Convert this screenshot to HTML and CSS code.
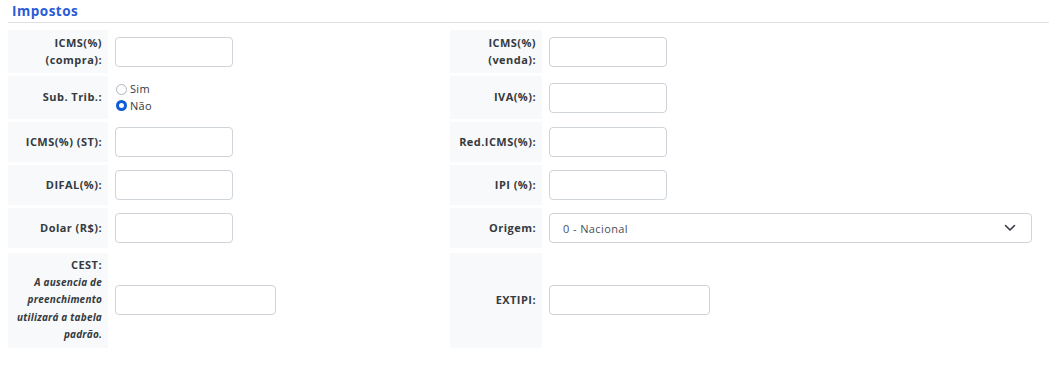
FILE: index.html
```html
<!DOCTYPE html>
<html lang="pt-BR">
<head>
<meta charset="utf-8">
<title>Impostos</title>
<link rel="stylesheet" href="styles.css">
</head>
<body>
<div class="section">
  <h2 class="section-title">Impostos</h2>
  <div class="form">
    <div class="lbl">ICMS(%)<br>(compra):</div>
    <div class="fld"><input class="inp" type="text"></div>
    <div class="lbl">ICMS(%)<br>(venda):</div>
    <div class="fld"><input class="inp" type="text"></div>

    <div class="lbl">Sub. Trib.:</div>
    <div class="fld">
      <div class="radios">
        <label class="radio"><span class="dot"></span>Sim</label>
        <label class="radio"><span class="dot on"></span>Não</label>
      </div>
    </div>
    <div class="lbl">IVA(%):</div>
    <div class="fld"><input class="inp" type="text"></div>

    <div class="lbl">ICMS(%) (ST):</div>
    <div class="fld"><input class="inp" type="text"></div>
    <div class="lbl">Red.ICMS(%):</div>
    <div class="fld"><input class="inp" type="text"></div>

    <div class="lbl">DIFAL(%):</div>
    <div class="fld"><input class="inp" type="text"></div>
    <div class="lbl">IPI (%):</div>
    <div class="fld"><input class="inp" type="text"></div>

    <div class="lbl">Dolar (R$):</div>
    <div class="fld"><input class="inp" type="text"></div>
    <div class="lbl">Origem:</div>
    <div class="fld">
      <div class="select">
        <span>0 - Nacional</span>
        <svg class="chev" width="12" height="8" viewBox="0 0 12 8"><path d="M1.5 1.5 L6 6 L10.5 1.5" fill="none" stroke="#343a40" stroke-width="1.6" stroke-linecap="round" stroke-linejoin="round"/></svg>
      </div>
    </div>

    <div class="lbl tall last"><div class="lbl-stack"><span>CEST:</span><em class="hint">A ausencia de<br>preenchimento<br>utilizará a tabela<br>padrão.</em></div></div>
    <div class="fld last"><input class="inp wide" type="text"></div>
    <div class="lbl last">EXTIPI:</div>
    <div class="fld last"><input class="inp wide" type="text"></div>
  </div>
</div>
</body>
</html>
```

FILE: styles.css
```css
* { box-sizing: border-box; }
body {
  margin: 0;
  padding: 0 0 0 8px;
  font-family: "Open Sans", "Noto Sans", sans-serif;
  color: #343a40;
  background: #fff;
}
.section { width: 1041px; }
.section-title {
  margin: 0;
  padding: 3px 0 3px 4px;
  font-size: 13.5px;
  line-height: 16px;
  font-weight: 700;
  letter-spacing: 0.5px;
  color: #2a5bd7;
  border-bottom: 1px solid #dee2e6;
  margin-right: -8px;
}
.form {
  margin-top: 7px;
  display: grid;
  grid-template-columns: 100px 342px 92px 1fr;
  row-gap: 3px;
}
.lbl {
  background: #f8f9fa;
  padding: 5px 6px;
  display: flex;
  align-items: center;
  justify-content: flex-end;
  text-align: right;
  font-size: 11px;
  line-height: 16.5px;
  font-weight: 700;
  letter-spacing: 0.45px;
  color: #343a40;
}
.lbl.tall { padding: 4px 6px; }
.last { margin-top: 2px; }
.lbl-stack { display: flex; flex-direction: column; align-items: flex-end; }
.hint {
  font-size: 10px;
  line-height: 17.5px;
  font-weight: 700;
  font-style: italic;
  letter-spacing: 0.2px;
}
.fld {
  padding: 5px 7px;
  display: flex;
  align-items: center;
}
.inp {
  width: 118px;
  height: 30px;
  border: 1px solid #ced4da;
  border-radius: 4px;
  background: #fff;
  margin: 0;
  padding: 0 8px;
  font: inherit;
}
.inp.wide { width: 161px; }
.radios { display: flex; flex-direction: column; margin-left: 1px; margin-top: 0; }
.radio {
  display: flex;
  align-items: center;
  font-size: 11px;
  line-height: 16.5px;
  letter-spacing: 0.3px;
  color: #343a40;
}
.dot {
  width: 11px;
  height: 11px;
  border: 1px solid #adb5bd;
  border-radius: 50%;
  margin-right: 3px;
  background: #fff;
}
.dot.on {
  border: 3px solid #0d5bd7;
  background: #fff;
}
.select {
  width: 483px;
  height: 30px;
  border: 1px solid #ced4da;
  border-radius: 4px;
  display: flex;
  align-items: center;
  justify-content: space-between;
  padding: 0 15px 0 13px;
  font-size: 11px;
  letter-spacing: 0.4px;
  color: #495057;
}
.chev { display: block; }
```
